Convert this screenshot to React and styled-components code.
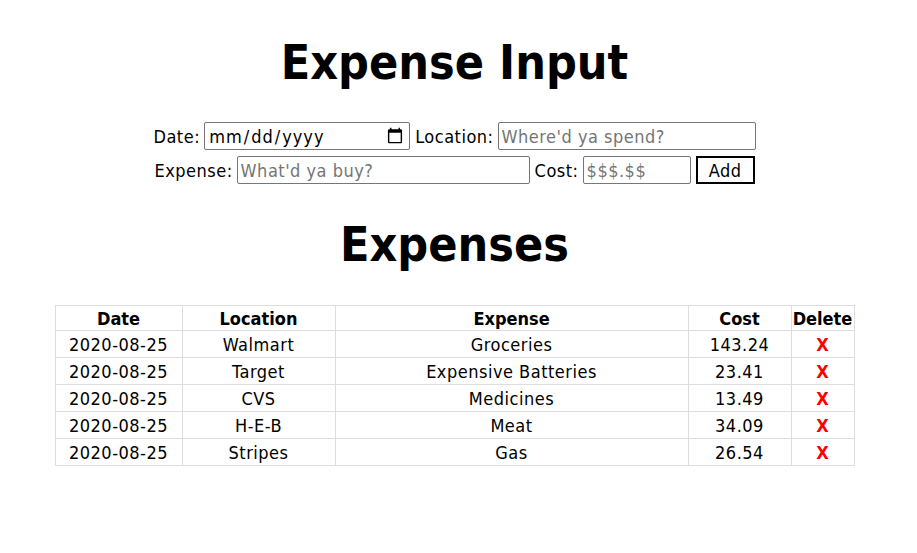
import React from "react";
import styled, { createGlobalStyle } from "styled-components";

const Global = createGlobalStyle`
  html, body { margin: 0; padding: 0; background: #fff; }
  body { font-family: "DejaVu Sans Condensed", "DejaVu Sans", sans-serif; font-stretch: condensed; color: #000; }
`;

const Page = styled.div`
  display: flex;
  flex-direction: column;
  align-items: center;
  padding: 32px 8px 0 0;
`;

const Title = styled.h1`
  margin: 0;
  font-size: 48px;
  font-weight: bold;
  line-height: 60px;
  letter-spacing: 0;
`;

const SubTitle = styled(Title)`
  margin-top: 30px;
`;

const Form = styled.form`
  margin-top: 30px;
  display: flex;
  flex-direction: column;
  align-items: center;
  gap: 6px;
  font-size: 18px;
  letter-spacing: 0.5px;
`;

const Line = styled.div`
  display: flex;
  align-items: center;
  gap: 4px;
`;

const Label = styled.label`
  margin-left: ${(p) => (p.$first ? 0 : "1px")};
`;

const Field = styled.input`
  box-sizing: border-box;
  width: ${(p) => p.$w}px;
  height: 28px;
  border: 1px solid #767676;
  border-radius: 2px;
  padding: 1px 3px;
  font: inherit;
  font-size: 18px;
  letter-spacing: 0.5px;
  &::placeholder { color: #757575; }
`;

const DateField = styled(Field)`
  letter-spacing: 1px;
`;

const AddButton = styled.button`
  box-sizing: border-box;
  width: 59px;
  height: 28px;
  padding: 0;
  margin-left: 1px;
  background: #fff;
  border: 2px solid #000;
  font: inherit;
  font-size: 18px;
  letter-spacing: 0.5px;
`;

const Table = styled.table`
  margin-top: 31px;
  width: 800px;
  table-layout: fixed;
  border-collapse: collapse;
  font-size: 18px;
`;

const Th = styled.th`
  border: 1px solid #ddd;
  height: 24px;
  padding: 0;
  font-weight: bold;
  width: ${(p) => (p.$w ? `${p.$w}px` : "auto")};
`;

const Td = styled.td`
  border: 1px solid #ddd;
  height: 26px;
  padding: 0;
  text-align: center;
  letter-spacing: 0.5px;
`;

const Del = styled.span`
  color: #f00;
  font-weight: bold;
  cursor: pointer;
  letter-spacing: 0;
`;

const rows = [
  ["2020-08-25", "Walmart", "Groceries", "143.24"],
  ["2020-08-25", "Target", "Expensive Batteries", "23.41"],
  ["2020-08-25", "CVS", "Medicines", "13.49"],
  ["2020-08-25", "H-E-B", "Meat", "34.09"],
  ["2020-08-25", "Stripes", "Gas", "26.54"],
];

export default function App() {
  return (
    <>
      <Global />
      <Page>
        <Title>Expense Input</Title>
        <Form onSubmit={(e) => e.preventDefault()}>
          <Line>
            <Label $first>Date:</Label>
            <DateField type="date" $w={206} />
            <Label>Location:</Label>
            <Field $w={258} placeholder="Where'd ya spend?" />
          </Line>
          <Line>
            <Label $first>Expense:</Label>
            <Field $w={293} placeholder="What'd ya buy?" />
            <Label>Cost:</Label>
            <Field $w={108} placeholder="$$$.$$" />
            <AddButton type="submit">Add</AddButton>
          </Line>
        </Form>
        <SubTitle>Expenses</SubTitle>
        <Table>
          <thead>
            <tr>
              <Th $w={126}>Date</Th>
              <Th $w={152}>Location</Th>
              <Th $w={352}>Expense</Th>
              <Th $w={102}>Cost</Th>
              <Th>Delete</Th>
            </tr>
          </thead>
          <tbody>
            {rows.map((r, i) => (
              <tr key={i}>
                {r.map((c, j) => (
                  <Td key={j}>{c}</Td>
                ))}
                <Td>
                  <Del>X</Del>
                </Td>
              </tr>
            ))}
          </tbody>
        </Table>
      </Page>
    </>
  );
}
